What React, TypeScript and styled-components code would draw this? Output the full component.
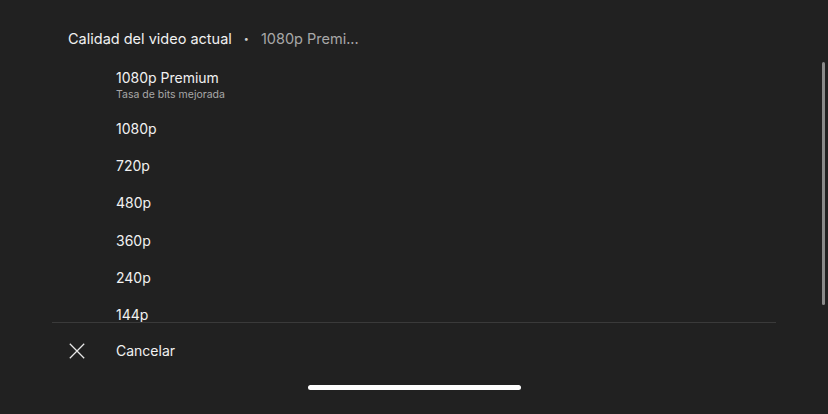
import React from 'react';
import styled, { createGlobalStyle } from 'styled-components';

const GlobalStyle = createGlobalStyle`
    html, body {
        margin: 0;
        padding: 0;
        background: #212121;
    }
    body {
        font-family: Inter, "Noto Sans", sans-serif;
        -webkit-font-smoothing: antialiased;
    }
`;

const qualities = ['1080p', '720p', '480p', '360p', '240p', '144p'];

function App() {
    return (
        <>
            <GlobalStyle />
            <Sheet>
                <Header>
                    <HeaderTitle>Calidad del video actual</HeaderTitle>
                    <Dot>•</Dot>
                    <HeaderValue>1080p Premi...</HeaderValue>
                </Header>
                <ListArea>
                    <List>
                        <PremiumItem>
                            <ItemLabel>1080p Premium</ItemLabel>
                            <ItemSub>Tasa de bits mejorada</ItemSub>
                        </PremiumItem>
                        {qualities.map((q) => (
                            <Item key={q}>
                                <ItemLabel>{q}</ItemLabel>
                            </Item>
                        ))}
                    </List>
                    <ScrollThumb />
                </ListArea>
                <Divider />
                <CancelRow>
                    <CloseIcon viewBox="0 0 20 20">
                        <path d="M2 2 L18 18 M18 2 L2 18" stroke="#e8e8e8" strokeWidth="1.4" fill="none" />
                    </CloseIcon>
                    <ItemLabel>Cancelar</ItemLabel>
                </CancelRow>
                <HomeBar />
            </Sheet>
        </>
    );
}

const Sheet = styled.div`
    width: 828px;
    height: 414px;
    display: flex;
    flex-direction: column;
    background: #212121;
    color: #f1f1f1;
    overflow: hidden;
`;

const Header = styled.div`
    display: flex;
    align-items: center;
    height: 22px;
    margin-top: 27px;
    padding-left: 68px;
    font-size: 14.5px;
`;

const HeaderTitle = styled.span`
    color: #f1f1f1;
`;

const Dot = styled.span`
    color: #d0d0d0;
    font-size: 9px;
    margin: 0 12px 0 12px;
`;

const HeaderValue = styled.span`
    color: #a8a8a8;
`;

const ListArea = styled.div`
    position: relative;
    height: 262px;
    margin-top: 11px;
    overflow: hidden;
`;

const List = styled.div`
    display: flex;
    flex-direction: column;
    padding-left: 116px;
`;

const PremiumItem = styled.div`
    display: flex;
    flex-direction: column;
    height: 50px;
    padding-top: 9px;
    box-sizing: border-box;
`;

const Item = styled.div`
    display: flex;
    align-items: center;
    height: 37.3px;
`;

const ItemLabel = styled.span`
    font-size: 14px;
    color: #f1f1f1;
    line-height: 18px;
`;

const ItemSub = styled.span`
    font-size: 10.5px;
    color: #a8a8a8;
    line-height: 14px;
    margin-top: 1px;
`;

const ScrollThumb = styled.div`
    position: absolute;
    right: 3px;
    top: 2px;
    width: 3px;
    height: 243px;
    border-radius: 2px;
    background: #8a8a8a;
`;

const Divider = styled.div`
    height: 1px;
    margin: 0 52px;
    background: #3a3a3a;
`;

const CancelRow = styled.div`
    display: flex;
    align-items: center;
    height: 56px;
    padding-left: 68px;
    gap: 30px;
`;

const CloseIcon = styled.svg`
    width: 18px;
    height: 18px;
`;

const HomeBar = styled.div`
    align-self: center;
    width: 213px;
    height: 5px;
    border-radius: 3px;
    background: #ffffff;
    margin-top: 6px;
`;

export default App;
